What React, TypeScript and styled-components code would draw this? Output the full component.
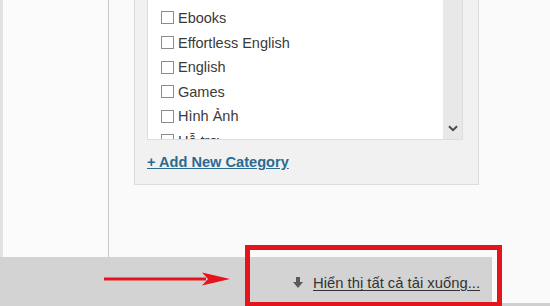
import React from "react";
import styled, { createGlobalStyle } from "styled-components";

const GlobalStyle = createGlobalStyle`
  html, body {
    margin: 0;
    padding: 0;
    background: #fafafa;
    font-family: "Liberation Sans", Arial, sans-serif;
  }
`;

const Page = styled.div`
  position: relative;
  width: 550px;
  height: 306px;
  display: flex;
  flex-direction: column;
  overflow: hidden;
`;

const Content = styled.div`
  flex: 1;
  display: flex;
  min-height: 0;
`;

const Edge = styled.div`
  width: 3px;
  background: #e2e2e2;
`;

const Sidebar = styled.div`
  width: 105px;
  border-right: 1px solid #c9c9c9;
  background: #fbfbfb;
`;

const Main = styled.div`
  flex: 1;
  padding-left: 25px;
  display: flex;
  align-items: flex-start;
`;

const Panel = styled.div`
  box-sizing: border-box;
  width: 345px;
  margin-top: -31px;
  padding: 10px 15px 14px 12px;
  background: #f1f1f1;
  border: 1px solid #dcdcdc;
`;

const ListBox = styled.div`
  display: flex;
  height: 160px;
  box-sizing: border-box;
  border: 1px solid #dddddd;
  background: #ffffff;
  overflow: hidden;
`;

const Items = styled.div`
  flex: 1;
  padding: 24.7px 0 0 13px;
`;

const Row = styled.label`
  display: flex;
  align-items: center;
  gap: 4px;
  height: 24.6px;
  font-size: 14.5px;
  color: #3a3a3a;
`;

const Box = styled.span`
  box-sizing: border-box;
  width: 13px;
  height: 13px;
  border: 1px solid #8c8c8c;
  background: #fff;
`;

const Scrollbar = styled.div`
  width: 19px;
  background: #e8e8e8;
  display: flex;
  align-items: flex-end;
  justify-content: center;
  padding-bottom: 7px;
  box-sizing: border-box;
`;

const AddLink = styled.a`
  display: block;
  margin-top: 14px;
  line-height: 16px;
  font-size: 14.6px;
  font-weight: bold;
  color: #2b6b90;
  text-decoration: underline;
`;

const Bar = styled.div`
  height: 49px;
  display: flex;
`;

const Shelf = styled.div`
  width: 492px;
  background: #d3d3d3;
  display: flex;
  align-items: center;
  justify-content: flex-end;
  padding: 3px 12px 0 0;
  box-sizing: border-box;
  gap: 10px;
`;

const ShelfRest = styled.div`
  flex: 1;
  background: #fafafa;
  border-bottom: 3px solid #cfcfcf;
`;

const ShowAll = styled.a`
  font-size: 14.8px;
  color: #333;
  text-decoration: underline;
  text-underline-offset: 2px;
`;

const RedBox = styled.div`
  position: absolute;
  left: 245px;
  top: 245px;
  width: 257px;
  height: 61px;
  box-sizing: border-box;
  border: 5px solid #e2141c;
  border-bottom-width: 4px;
`;

const Arrow = styled.svg`
  position: absolute;
  left: 104px;
  top: 271px;
`;

const categories = ["Ebooks", "Effortless English", "English", "Games", "Hình Ảnh", "Hỗ trợ"];

export default function App() {
  return (
    <Page>
      <GlobalStyle />
      <Content>
        <Edge />
        <Sidebar />
        <Main>
          <Panel>
            <ListBox>
              <Items>
                {categories.map((c) => (
                  <Row key={c}>
                    <Box />
                    {c}
                  </Row>
                ))}
              </Items>
              <Scrollbar>
                <svg width="10" height="7" viewBox="0 0 10 7">
                  <path d="M1 1.2 L5 5.2 L9 1.2" fill="none" stroke="#4a4a4a" strokeWidth="2" />
                </svg>
              </Scrollbar>
            </ListBox>
            <AddLink>+ Add New Category</AddLink>
          </Panel>
        </Main>
      </Content>
      <Bar>
        <Shelf>
          <svg width="10" height="12" viewBox="0 0 10 12">
            <rect x="3" y="0" width="4" height="6" fill="#5a5a5a" />
            <polygon points="0,5 10,5 5,11" fill="#5a5a5a" />
          </svg>
          <ShowAll>Hiển thị tất cả tải xuống...</ShowAll>
        </Shelf>
        <ShelfRest />
      </Bar>
      <RedBox />
      <Arrow width="126" height="16" viewBox="0 0 126 16">
        <rect x="0" y="6.5" width="102" height="3" fill="#e5141c" />
        <polygon points="98,1.5 126,8 98,14.5 104,8" fill="#e5141c" />
      </Arrow>
    </Page>
  );
}
